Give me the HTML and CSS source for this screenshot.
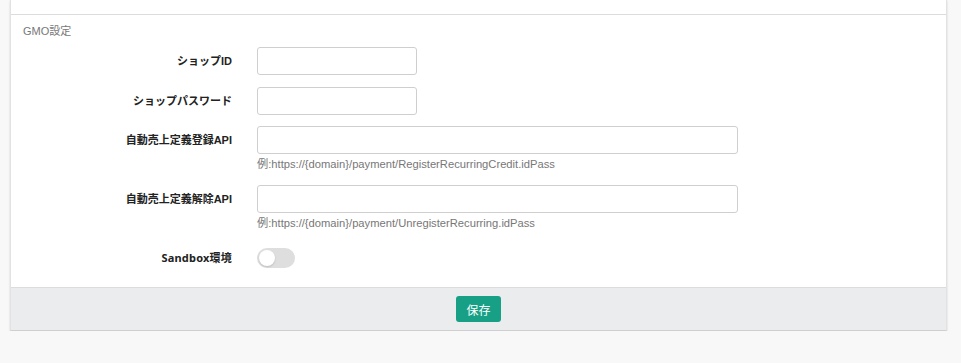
FILE: index.html
```html
<!DOCTYPE html>
<html lang="ja">
<head>
    <meta charset="UTF-8">
    <meta name="viewport" content="width=device-width, initial-scale=1.0">
    <title>GMO設定</title>
    <link rel="stylesheet" href="styles.css">
</head>
<body>
    <div class="card">
        <div class="card-top"></div>

        <div class="card-body">
            <div class="legend">GMO設定</div>

            <div class="form-row">
                <label class="form-label" for="shopId">ショップID</label>
                <div class="form-field">
                    <input type="text" id="shopId" class="input input-short">
                </div>
            </div>

            <div class="form-row form-row-tight">
                <label class="form-label" for="shopPass">ショップパスワード</label>
                <div class="form-field">
                    <input type="password" id="shopPass" class="input input-short">
                </div>
            </div>

            <div class="form-row">
                <label class="form-label" for="registerApi">自動売上定義登録API</label>
                <div class="form-field">
                    <input type="text" id="registerApi" class="input input-long">
                    <p class="help">例:https://{domain}/payment/RegisterRecurringCredit.idPass</p>
                </div>
            </div>

            <div class="form-row">
                <label class="form-label" for="unregisterApi">自動売上定義解除API</label>
                <div class="form-field">
                    <input type="text" id="unregisterApi" class="input input-long">
                    <p class="help">例:https://{domain}/payment/UnregisterRecurring.idPass</p>
                </div>
            </div>

            <div class="form-row form-row-last">
                <label class="form-label form-label-alt" for="sandbox">Sandbox環境</label>
                <div class="form-field">
                    <label class="switch">
                        <input type="checkbox" id="sandbox">
                        <span class="slider"></span>
                    </label>
                </div>
            </div>
        </div>

        <div class="card-footer">
            <button type="button" class="btn-save">保存</button>
        </div>
    </div>
</body>
</html>
```

FILE: styles.css
```css
:root {
    --border: #dcdcdc;
    --input-border: #cfcfcf;
    --muted: #777;
    --primary: #17a085;
    --footer: #ebeced;
}

body {
    margin: 0;
    padding: 0 14px 0 10px;
    background: #f8f8f8;
    font-family: 'Liberation Sans', 'Noto Sans CJK JP', sans-serif;
    color: #222;
}

.card {
    background: white;
    border: 1px solid #e2e2e2;
    border-top: none;
    border-bottom: 1px solid #cfcfcf;
    box-shadow: 0 1px 2px rgba(0,0,0,0.15);
}

.card-top {
    height: 14px;
    border-bottom: 1px solid var(--border);
}

.card-body {
    padding: 8px 12px 15px 12px;
}

.legend {
    font-size: 11px;
    line-height: 16px;
    color: var(--muted);
    margin-bottom: 8px;
}

.form-row {
    display: flex;
    align-items: flex-start;
    margin-bottom: 12px;
}

.form-row-tight {
    margin-bottom: 11px;
}

.form-row-last {
    margin-bottom: 0;
}

.form-label {
    width: 209px;
    flex-shrink: 0;
    margin-right: 25px;
    text-align: right;
    font-size: 11px;
    font-weight: 700;
    line-height: 28px;
}

.form-label-alt {
    font-family: 'Noto Sans', 'Noto Sans CJK JP', sans-serif;
    letter-spacing: 0.2px;
}

.form-field {
    flex: 1;
}

.input {
    display: block;
    box-sizing: border-box;
    height: 28px;
    border: 1px solid var(--input-border);
    border-radius: 3px;
    background: white;
    padding: 4px 8px;
    font-size: 12px;
}

.input-short {
    width: 160px;
}

.input-long {
    width: 481px;
}

.help {
    margin: 4px 0 3px 0;
    font-size: 11.2px;
    line-height: 12px;
    color: var(--muted);
}

.switch {
    display: flex;
    align-items: center;
    height: 28px;
}

.switch input {
    display: none;
}

.slider {
    position: relative;
    display: block;
    width: 38px;
    height: 20px;
    border-radius: 10px;
    background: #dedede;
}

.slider::before {
    content: '';
    position: absolute;
    top: 2px;
    left: 2px;
    width: 16px;
    height: 16px;
    border-radius: 50%;
    background: white;
    box-shadow: 0 1px 2px rgba(0,0,0,0.15);
}

.card-footer {
    display: flex;
    justify-content: center;
    padding: 8px 0;
    background: var(--footer);
    border-top: 1px solid var(--border);
}

.btn-save {
    height: 26px;
    padding: 0 10px;
    border: none;
    border-radius: 3px;
    background: var(--primary);
    color: white;
    font-family: 'Noto Sans CJK JP', sans-serif;
    font-size: 12px;
    cursor: pointer;
}
```
